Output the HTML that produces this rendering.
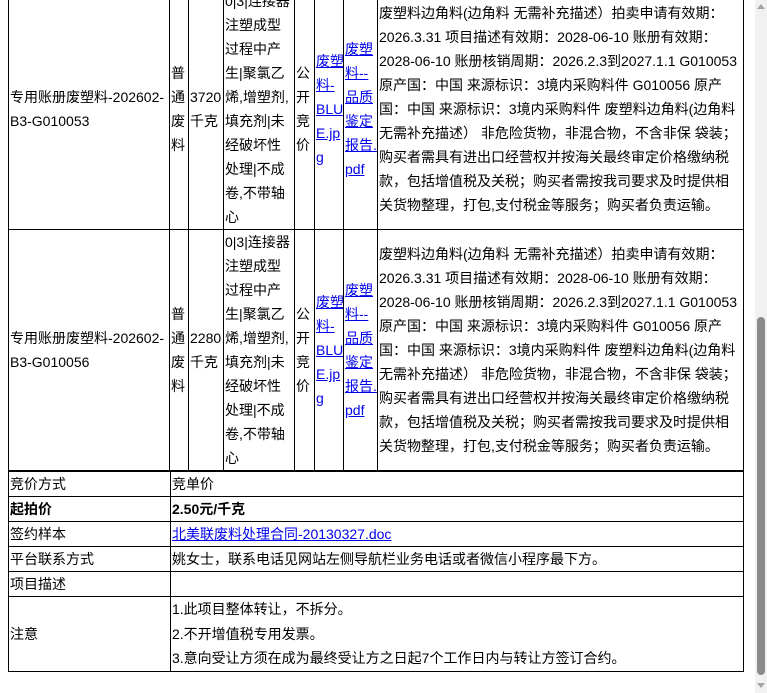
<!DOCTYPE html>
<html><head><meta charset="utf-8"><style>
html,body{margin:0;padding:0;background:#fff;overflow:hidden;width:767px;height:693px}
body{font-family:"Liberation Sans","Noto Sans CJK SC",sans-serif;font-size:14px;color:#000;position:relative}
table{border-collapse:collapse;table-layout:fixed;position:absolute;left:8px}
td{border:1px solid #000;padding:0 1px;vertical-align:middle;line-height:24px;word-break:break-all;overflow:hidden;white-space:nowrap}
a{color:#00e}
#t1{top:-12px;width:736px}
#t1 td{height:238px}
#t2{top:470px;width:736px;border-top:2px solid #000}
#t2 td{height:24px;line-height:24px}
.sb{position:absolute;right:0;top:0;width:12px;height:693px;background:#f1f1f1}
.th{position:absolute;left:2px;width:8px;top:317px;height:358px;background:#8a8a8a;border-radius:4px}
</style></head><body>
<table id="t1">
<colgroup><col style="width:161px"><col style="width:19px"><col style="width:35px"><col style="width:71px"><col style="width:20px"><col style="width:29px"><col style="width:34px"><col></colgroup>
<tr><td>专用账册废塑料-202602-<br>B3-G010053</td><td>普<br>通<br>废<br>料</td><td>3720<br>千克</td><td>0|3|连接器<br>注塑成型<br>过程中产<br>生|聚氯乙<br>烯,增塑剂,<br>填充剂|未<br>经破坏性<br>处理|不成<br>卷,不带轴<br>心</td><td>公<br>开<br>竞<br>价</td><td><a href="#">废塑<br>料-<br>BLU<br>E.jp<br>g</a></td><td><a href="#">废塑<br>料--<br>品质<br>鉴定<br>报告.<br>pdf</a></td><td>废塑料边角料(边角料 无需补充描述）拍卖申请有效期：<br>2026.3.31 项目描述有效期：2028-06-10 账册有效期：<br>2028-06-10 账册核销周期：2026.2.3到2027.1.1 G010053<br>原产国：中国 来源标识：3境内采购料件 G010056 原产<br>国：中国 来源标识：3境内采购料件 废塑料边角料(边角料<br>无需补充描述） 非危险货物，非混合物，不含非保 袋装；<br>购买者需具有进出口经营权并按海关最终审定价格缴纳税<br>款，包括增值税及关税；购买者需按我司要求及时提供相<br>关货物整理，打包,支付税金等服务；购买者负责运输。</td></tr>
<tr><td>专用账册废塑料-202602-<br>B3-G010056</td><td>普<br>通<br>废<br>料</td><td>2280<br>千克</td><td>0|3|连接器<br>注塑成型<br>过程中产<br>生|聚氯乙<br>烯,增塑剂,<br>填充剂|未<br>经破坏性<br>处理|不成<br>卷,不带轴<br>心</td><td>公<br>开<br>竞<br>价</td><td><a href="#">废塑<br>料-<br>BLU<br>E.jp<br>g</a></td><td><a href="#">废塑<br>料--<br>品质<br>鉴定<br>报告.<br>pdf</a></td><td>废塑料边角料(边角料 无需补充描述）拍卖申请有效期：<br>2026.3.31 项目描述有效期：2028-06-10 账册有效期：<br>2028-06-10 账册核销周期：2026.2.3到2027.1.1 G010053<br>原产国：中国 来源标识：3境内采购料件 G010056 原产<br>国：中国 来源标识：3境内采购料件 废塑料边角料(边角料<br>无需补充描述） 非危险货物，非混合物，不含非保 袋装；<br>购买者需具有进出口经营权并按海关最终审定价格缴纳税<br>款，包括增值税及关税；购买者需按我司要求及时提供相<br>关货物整理，打包,支付税金等服务；购买者负责运输。</td></tr>
</table>
<table id="t2">
<colgroup><col style="width:162px"><col></colgroup>
<tr><td>竞价方式</td><td>竞单价</td></tr>
<tr><td><b>起拍价</b></td><td><b>2.50元/千克</b></td></tr>
<tr><td>签约样本</td><td><a href="#">北美联废料处理合同-20130327.doc</a></td></tr>
<tr><td>平台联系方式</td><td>姚女士，联系电话见网站左侧导航栏业务电话或者微信小程序最下方。</td></tr>
<tr><td>项目描述</td><td></td></tr>
<tr><td style="height:72px">注意</td><td style="height:72px;line-height:24.5px">1.此项目整体转让，不拆分。<br>2.不开增值税专用发票。<br>3.意向受让方须在成为最终受让方之日起7个工作日内与转让方签订合约。</td></tr>
</table>
<div class="sb"><div style="position:absolute;left:2px;top:4px;width:0;height:0;border-left:4px solid transparent;border-right:4px solid transparent;border-bottom:5px solid #a3a3a3"></div><div class="th"></div><div style="position:absolute;left:2px;top:683px;width:0;height:0;border-left:4px solid transparent;border-right:4px solid transparent;border-top:5px solid #a3a3a3"></div></div>
</body></html>
